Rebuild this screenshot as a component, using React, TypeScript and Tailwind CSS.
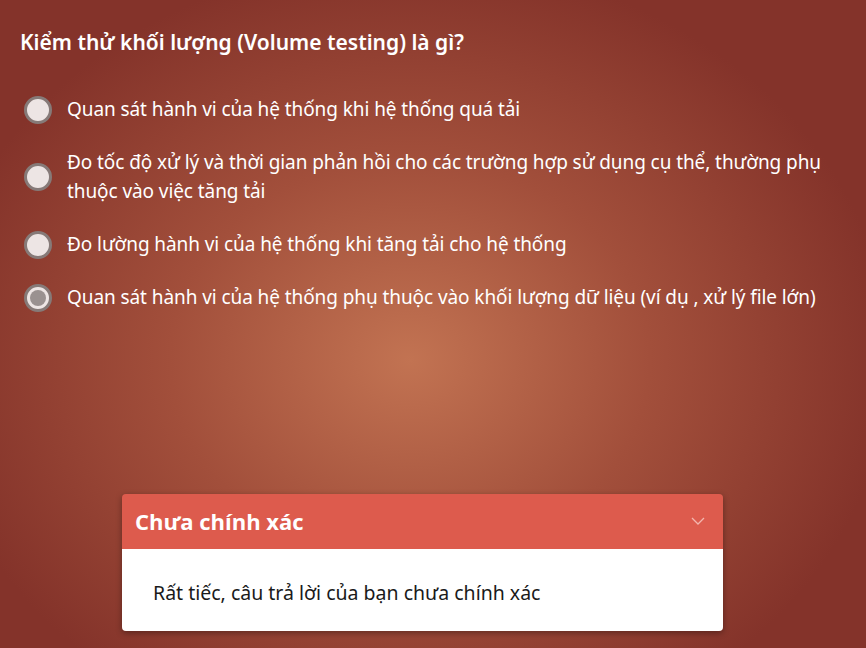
import React from 'react';

const options = [
  'Quan sát hành vi của hệ thống khi hệ thống quá tải',
  'Đo tốc độ xử lý và thời gian phản hồi cho các trường hợp sử dụng cụ thể, thường phụ thuộc vào việc tăng tải',
  'Đo lường hành vi của hệ thống khi tăng tải cho hệ thống',
  'Quan sát hành vi của hệ thống phụ thuộc vào khối lượng dữ liệu (ví dụ , xử lý file lớn)',
];

const Radio = ({ checked }: { checked: boolean }) => (
  <span className="shrink-0 w-7 h-7 rounded-full border-[3px] border-[#867a78] bg-[#ede5e4] flex items-center justify-center">
    {checked && <span className="w-[16px] h-[16px] rounded-full bg-[#9a9190]" />}
  </span>
);

const App = () => {
  return (
    <div
      className="w-[866px] h-[648px] overflow-hidden bg-[radial-gradient(ellipse_480px_400px_at_410px_360px,#c27352_0%,#a24f3b_50%,#84332a_100%)] text-white"
      style={{ fontFamily: '"Noto Sans", "Open Sans", sans-serif' }}
    >
      <div className="pl-5 pr-[10px] pt-[28px]">
        <h1 className="text-[21px] font-semibold leading-[28px]">Kiểm thử khối lượng (Volume testing) là gì?</h1>
        <div className="mt-[39px] flex flex-col gap-[24px]">
          {options.map((o, i) => (
            <label key={i} className="flex items-center gap-[15px] pl-1">
              <Radio checked={i === 3} />
              <span className="text-[19px] leading-[29px] tracking-[-0.08px]">{o}</span>
            </label>
          ))}
        </div>
      </div>
      <div className="mt-[182px] ml-[122px] w-[601px] rounded-[4px] overflow-hidden shadow-[0_2px_6px_rgba(0,0,0,0.35)]">
        <div className="h-[55px] bg-[#dd5b4d] flex items-center justify-between pl-[13px] pr-[18px]">
          <span className="text-[22px] font-bold" style={{ fontFamily: '"Open Sans", sans-serif' }}>Chưa chính xác</span>
          <svg width="14" height="9" viewBox="0 0 14 9" fill="none">
            <path d="M1 1l6 6 6-6" stroke="#f3b6ae" strokeWidth="1.3" />
          </svg>
        </div>
        <div className="bg-white h-[82px] flex items-center pl-[31px] pt-[5px] text-[#1a1a1a] text-[19.5px]">
          Rất tiếc, câu trả lời của bạn chưa chính xác
        </div>
      </div>
    </div>
  );
};

export default App;
